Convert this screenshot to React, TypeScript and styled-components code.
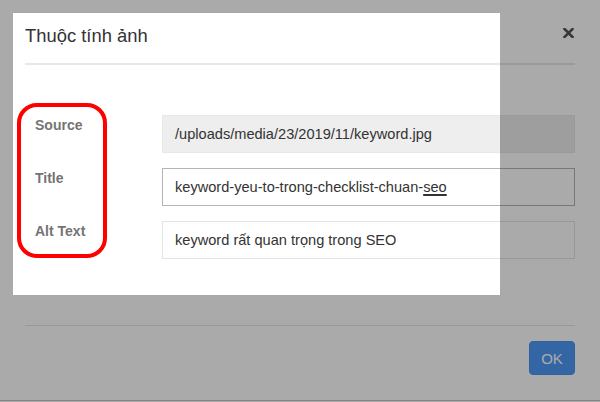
import React from "react";
import styled, { createGlobalStyle } from "styled-components";

const GlobalStyle = createGlobalStyle`
  html, body {
    margin: 0;
    padding: 0;
    width: 600px;
    height: 402px;
    overflow: hidden;
    background: #ffffff;
    font-family: "Liberation Sans", Arial, Helvetica, sans-serif;
  }
  * { box-sizing: border-box; }
`;

const Page = styled.div`
  position: relative;
  width: 600px;
  height: 402px;
  overflow: hidden;
  background: #ffffff;
`;

const Modal = styled.div`
  display: flex;
  flex-direction: column;
  width: 600px;
  height: 401px;
  background: #ffffff;
  border-bottom: 1px solid #c8c8c8;
`;

const Header = styled.div`
  display: flex;
  justify-content: space-between;
  align-items: flex-start;
  margin: 0 25px;
  padding: 26px 0 17px;
  border-bottom: 2px solid #e8e8e8;
`;

const Title = styled.h4`
  margin: 0;
  font-size: 18.4px;
  line-height: 20px;
  font-weight: 400;
  color: #333333;
`;

const Close = styled.button`
  display: flex;
  margin: 2px 1px 0 0;
  padding: 0;
  border: 0;
  background: transparent;
  cursor: pointer;
`;

const Body = styled.div`
  display: grid;
  grid-template-columns: 137px 1fr;
  row-gap: 15px;
  margin: 0 25px;
  padding: 50px 0 66px;
`;

const Label = styled.label`
  padding-left: 10px;
  font-size: 14px;
  line-height: 20px;
  font-weight: 700;
  color: #747474;
`;

const Field = styled.div<{ $tone: "readonly" | "active" | "plain" }>`
  display: flex;
  align-items: center;
  height: 38px;
  padding: 0 12px;
  font-size: 14.6px;
  color: #333333;
  white-space: nowrap;
  background: ${(p) => (p.$tone === "readonly" ? "#eeeeee" : "#ffffff")};
  border: 1px solid
    ${(p) =>
      p.$tone === "active" ? "#b4b4b4" : p.$tone === "readonly" ? "#e8e8e8" : "#e4e4e4"};
`;

const Spell = styled.span`
  text-decoration: underline;
  text-decoration-thickness: 1.5px;
  text-underline-offset: 2px;
`;

const Footer = styled.div`
  display: flex;
  justify-content: flex-end;
  margin: 0 25px;
  padding-top: 15px;
  border-top: 1px solid #e5e5e5;
`;

const OkButton = styled.button`
  width: 46px;
  height: 34px;
  padding: 0;
  border: 1px solid #4a93f0;
  border-radius: 4px;
  background: #4f99f9;
  color: #ffffff;
  font-family: "Liberation Sans", Arial, sans-serif;
  font-size: 15px;
  cursor: pointer;
`;

const Spotlight = styled.div`
  position: absolute;
  left: 13px;
  top: 13px;
  width: 487px;
  height: 282px;
  pointer-events: none;
  box-shadow: 0 0 0 1200px rgba(0, 0, 0, 0.333);
  z-index: 2;
`;

const Annotation = styled.div`
  position: absolute;
  left: 17px;
  top: 103px;
  width: 90px;
  height: 155px;
  border: 4px solid #ff0000;
  border-radius: 20px;
  pointer-events: none;
  z-index: 3;
`;

export default function App() {
  return (
    <>
      <GlobalStyle />
      <Page>
        <Modal>
          <Header>
            <Title>Thuộc tính ảnh</Title>
            <Close aria-label="Close">
              <svg width="11" height="10" viewBox="0 0 11 10">
                <path
                  d="M1.5 1 L9.5 9 M9.5 1 L1.5 9"
                  stroke="#555555"
                  strokeWidth="2.6"
                  strokeLinecap="square"
                  fill="none"
                />
              </svg>
            </Close>
          </Header>
          <Body>
            <Label>Source</Label>
            <Field $tone="readonly">/uploads/media/23/2019/11/keyword.jpg</Field>
            <Label>Title</Label>
            <Field $tone="active">
              keyword-yeu-to-trong-checklist-chuan-<Spell>seo</Spell>
            </Field>
            <Label>Alt Text</Label>
            <Field $tone="plain">keyword rất quan trọng trong SEO</Field>
          </Body>
          <Footer>
            <OkButton>OK</OkButton>
          </Footer>
        </Modal>
        <Spotlight />
        <Annotation />
      </Page>
    </>
  );
}
